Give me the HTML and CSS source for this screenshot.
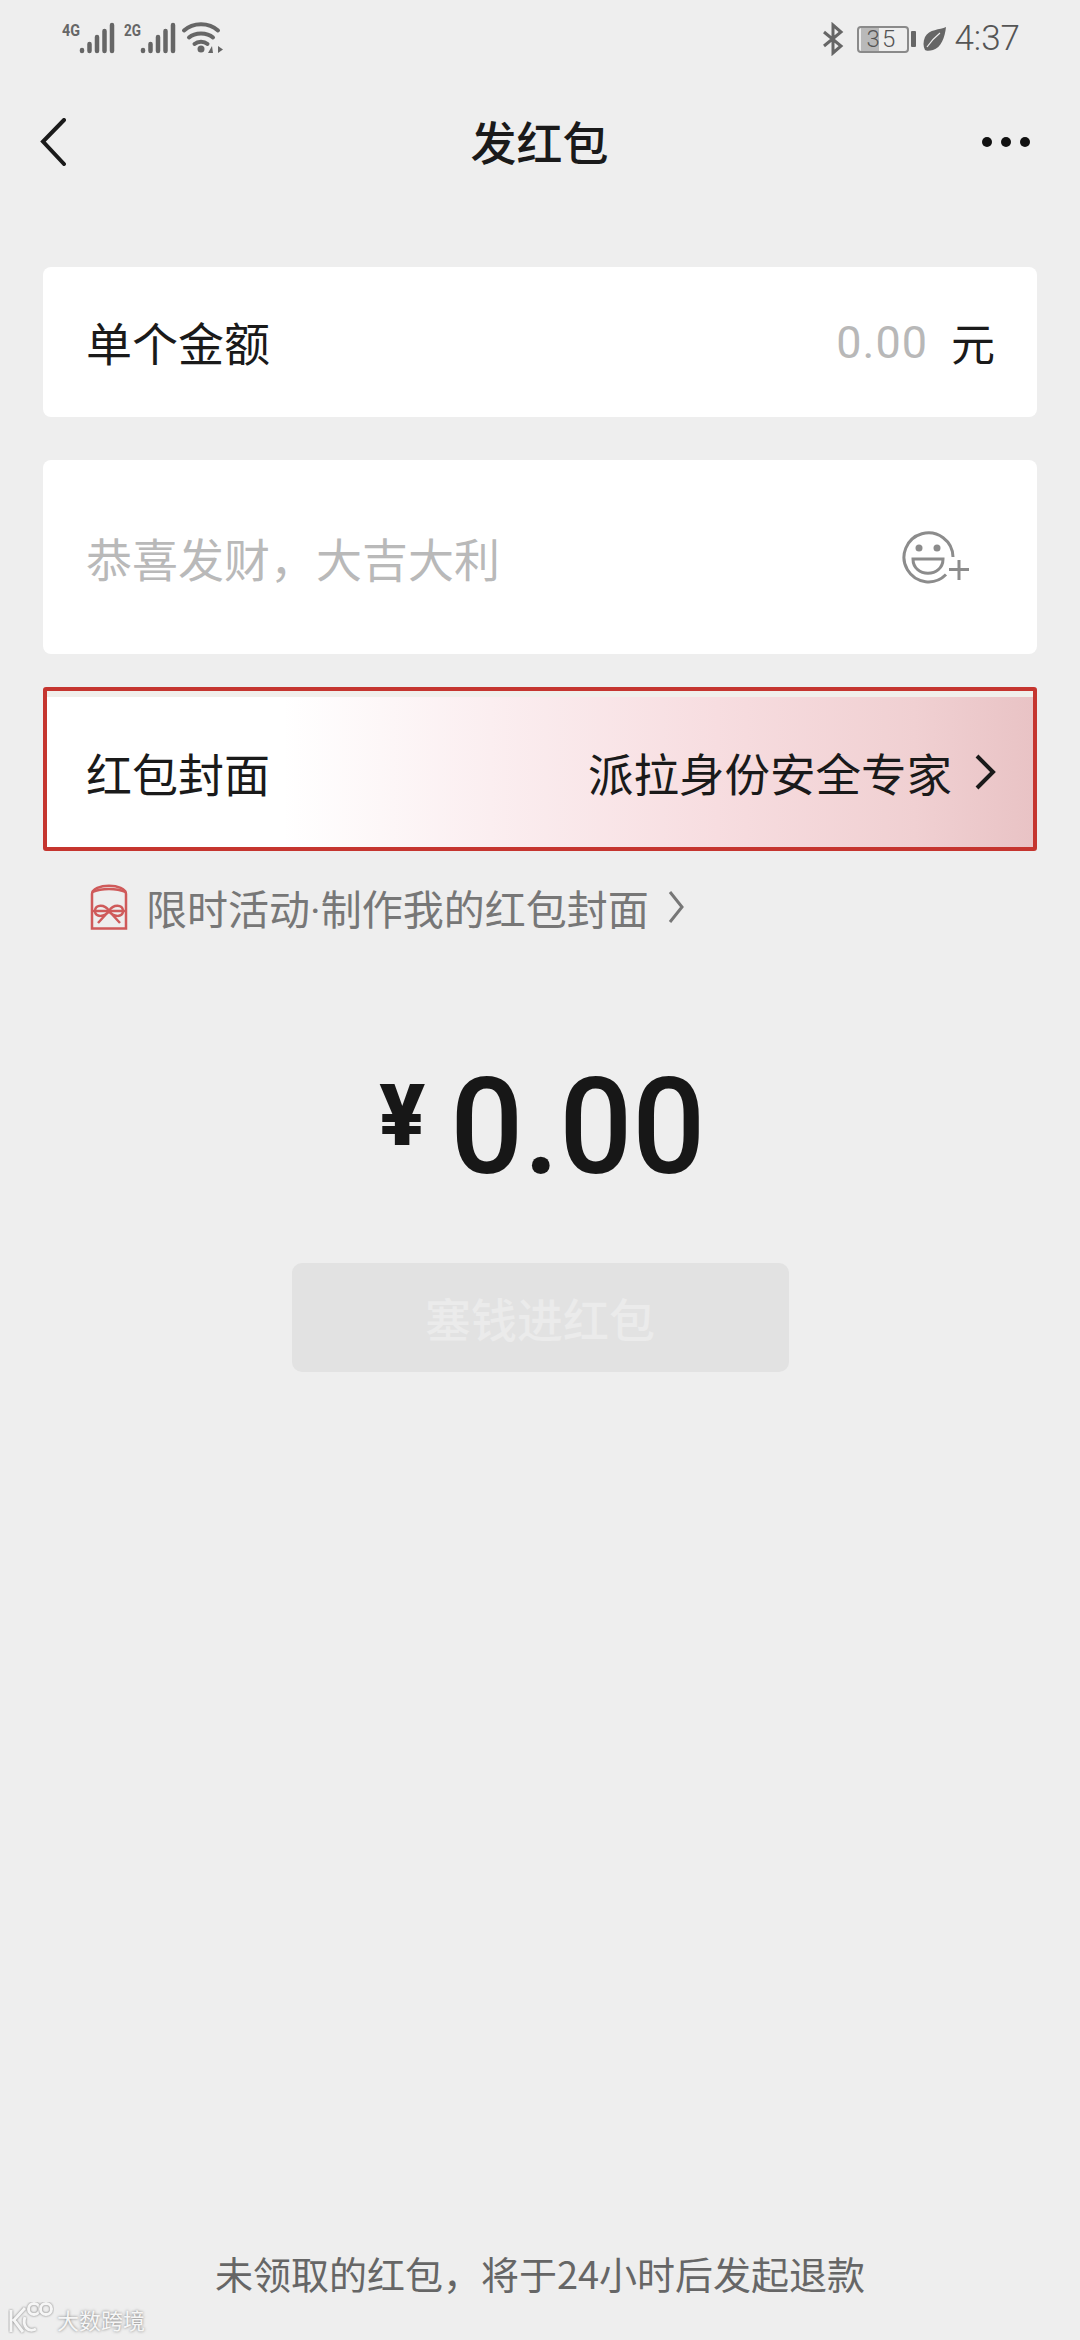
FILE: index.html
```html
<!DOCTYPE html>
<html lang="zh-CN">
<head>
    <meta charset="UTF-8">
    <meta name="viewport" content="width=device-width, initial-scale=1.0">
    <title>发红包</title>
    <link rel="stylesheet" href="styles.css">
</head>
<body>
    <div id="page">
        <div class="status">
            <svg class="status-left" width="162" height="36" viewBox="0 0 162 36">
                <text x="0" y="15" class="net" textLength="18" lengthAdjust="spacingAndGlyphs">4G</text>
                <g class="bars">
                    <path d="M20 30v-1M27.500 30v-7M35 30v-14M42.500 30v-20M50 30v-26"/>
                </g>
                <text x="62" y="15" class="net" textLength="17" lengthAdjust="spacingAndGlyphs">2G</text>
                <g class="bars">
                    <path d="M81 30v-1M88.500 30v-7M96 30v-14M103.500 30v-20M111 30v-26"/>
                </g>
                <g class="wifi">
                    <path d="M122 9.500C131 1 147 1 156 9.500"/>
                    <path d="M127 16.500C133 11 145 11 151 16.500"/>
                    <path d="M132.500 23C136 20 142 20 145.500 23"/>
                </g>
                <circle cx="139" cy="28" r="3.500" fill="#666"/>
                <path d="M151 32l-1-7-4 7h8M156 25v7l5-3.500z" fill="#666"/>
            </svg>
            <div class="status-right">
                <svg width="22" height="34" viewBox="0 0 22 34" class="bt">
                    <path d="M2 10l17 14-8 7V3l8 7-17 14"/>
                </svg>
                <div class="battery">
                    <div class="battery-fill"></div>
                    <span class="battery-num">35</span>
                </div>
                <div class="battery-nub"></div>
                <svg width="23" height="24" viewBox="0 0 23 24" class="leaf">
                    <path d="M23 0C17 3 6 2 2 10c-2 5-2 9 0 13 1 1 5 1 8 0C18 21 22 10 23 0z" fill="#666"/>
                    <path d="M4 20C8 14 12 10 17 6" stroke="#eee" stroke-width="1.200" fill="none"/>
                </svg>
                <span class="time">4:37</span>
            </div>
        </div>

        <div class="nav">
            <svg class="back" width="26" height="48" viewBox="0 0 26 48">
                <path d="M24 2L3 23.500 24 46"/>
            </svg>
            <span class="nav-title">发红包</span>
            <div class="more"><i></i><i></i><i></i></div>
        </div>

        <div class="content">
            <div class="card card-amount">
                <span>单个金额</span>
                <div class="amount-input">
                    <span class="amount-zero">0.00</span>
                    <span class="amount-unit">元</span>
                </div>
            </div>

            <div class="card card-wish">
                <span class="placeholder">恭喜发财，大吉大利</span>
                <svg class="smile" width="70" height="54" viewBox="0 0 70 54">
                    <path d="M44 44.500A24.500 24.500 0 1 1 51 27"/>
                    <circle cx="17" cy="18" r="3.500" class="dot"/>
                    <circle cx="35" cy="18" r="3.500" class="dot"/>
                    <path d="M11 29h30c0 19-30 19-30 0z"/>
                    <path d="M47 39.500h20M57 30v20"/>
                </svg>
            </div>

            <div class="cover">
                <div class="cover-inner">
                    <span>红包封面</span>
                    <div class="cover-value">
                        <span>派拉身份安全专家</span>
                        <svg width="22" height="38" viewBox="0 0 22 38">
                            <path d="M3 3l16 16L3 35"/>
                        </svg>
                    </div>
                </div>
            </div>

            <div class="promo">
                <svg width="38" height="46" viewBox="0 0 38 46">
                    <path d="M2 44.500V10C2 -1 36 -1 36 10v34.500z"/>
                    <path d="M2 8c10-4 24-4 34 0M2 27h34"/>
                    <path d="M19 27c-4-7-14-7-14 0s10 6 14 0c4 6 14 7 14 0s-10-7-14 0zM19 27L8 39M19 27l11 12"/>
                </svg>
                <span class="promo-text">限时活动<span class="promo-dot">·</span>制作我的红包封面</span>
                <svg class="promo-arrow" width="16" height="34" viewBox="0 0 16 34">
                    <path d="M2 2l12 15L2 32"/>
                </svg>
            </div>

            <div class="total">
                <span class="total-sign">¥</span>
                <span class="total-num">0.00</span>
            </div>

            <div class="submit">塞钱进红包</div>
        </div>

        <div class="footer">未领取的红包，将于24小时后发起退款</div>

        <div class="watermark">
            <svg width="46" height="34" viewBox="0 0 46 34">
                <path d="M3 8v22M17 6L6 18l9 12M17 15c-3 9 3 16 11 12"/>
                <circle cx="26" cy="7" r="5.500"/>
                <circle cx="38" cy="7" r="5.500"/>
            </svg>
            <span>大数跨境</span>
        </div>
    </div>
</body>
</html>
```

FILE: styles.css
```css
*{
    padding: 0;
    margin: 0;
    box-sizing: border-box;
}
body{
    background: #eeeeee;
    font-family: "Noto Sans CJK SC", Roboto, sans-serif;
    color: #1a1a1a;
}
#page{
    width: 1080px;
    height: 2340px;
    position: relative;
    display: flex;
    flex-direction: column;
    overflow: hidden;
}

/* status bar */
.status{
    height: 74px;
    padding: 4px 60px 0 62px;
    display: flex;
    align-items: center;
    justify-content: space-between;
}
.net{
    font-family: Roboto, sans-serif;
    font-weight: 700;
    font-size: 16px;
    fill: #666;
}
.bars path{
    stroke: #666;
    stroke-width: 4.500;
    stroke-linecap: round;
    fill: none;
}
.wifi path{
    stroke: #666;
    stroke-width: 4;
    stroke-linecap: round;
    fill: none;
}
.status-right{
    display: flex;
    align-items: center;
}
.bt{
    margin-right: 13px;
}
.bt path{
    stroke: #666;
    stroke-width: 3;
    fill: none;
}
.battery{
    width: 52px;
    height: 27px;
    border: 2px solid #8a8a8a;
    border-radius: 4px;
    position: relative;
    overflow: hidden;
}
.battery-fill{
    width: 18px;
    height: 100%;
    background: #b9b9b9;
    margin-left: 2px;
}
.battery-num{
    position: absolute;
    top: 0;
    left: 0;
    width: 100%;
    padding-right: 3px;
    text-align: center;
    font-family: Roboto, sans-serif;
    font-size: 24px;
    font-weight: 300;
    line-height: 23px;
    letter-spacing: 2px;
    color: #555;
}
.battery-nub{
    width: 5px;
    height: 16px;
    margin-left: 2px;
    background: #666;
    border-radius: 1px;
}
.leaf{
    margin-left: 7px;
}
.time{
    margin-left: 8px;
    font-family: Roboto, sans-serif;
    font-size: 35px;
    font-weight: 300;
    color: #555;
    line-height: 40px;
}

/* title bar */
.nav{
    height: 136px;
    padding: 0 50px 4px 40px;
    display: flex;
    align-items: center;
    justify-content: space-between;
}
.back{
    margin-top: 4px;
}
.back path{
    stroke: #1a1a1a;
    stroke-width: 4;
    stroke-linecap: round;
    fill: none;
}
.nav-title{
    font-size: 46px;
    font-weight: 500;
    line-height: 60px;
    margin-left: 31px;
}
.more{
    display: flex;
    gap: 9px;
    margin-top: 4px;
}
.more i{
    width: 10px;
    height: 10px;
    border-radius: 50%;
    background: #111;
}

.content{
    padding: 57px 43px 0;
}
.card{
    background: #fff;
    border-radius: 8px;
    padding: 0 42px 0 43px;
    display: flex;
    align-items: center;
    justify-content: space-between;
    font-size: 46px;
}
.card-amount{
    height: 150px;
    padding-bottom: 3px;
}
.amount-input{
    display: flex;
    align-items: center;
    margin-top: 3px;
}
.amount-zero{
    font-family: Roboto, sans-serif;
    font-size: 45px;
    letter-spacing: 1px;
    color: #b8b8b8;
    margin-right: 23px;
}
.amount-unit{
    font-size: 44px;
}
.card-wish{
    height: 194px;
    margin-top: 43px;
    padding-right: 65px;
}
.placeholder{
    color: #b9b9b9;
}
.smile path{
    stroke: #8c8c8c;
    stroke-width: 3;
    fill: none;
}
.smile .dot{
    fill: #8c8c8c;
}

/* the red frame is an annotation drawn on the screenshot */
.cover{
    height: 164px;
    margin-top: 33px;
    border: 4px solid #c5352f;
    border-radius: 3px;
    padding-top: 6px;
    background: #f0efeb;
}
.cover-inner{
    height: 100%;
    padding: 0 37px 0 39px;
    display: flex;
    align-items: center;
    justify-content: space-between;
    font-size: 46px;
    background: linear-gradient(90deg, #fff 0%, #fff 24%, #fbeef0 45%, #f7dde0 68%, #f0d0d2 88%, #e9c3c5 100%);
}
.cover-value{
    display: flex;
    align-items: center;
    gap: 22px;
    font-size: 45.500px;
}
.cover-value svg path{
    stroke: #1a1a1a;
    stroke-width: 4;
    fill: none;
}

.promo{
    height: 60px;
    margin-top: 26px;
    padding-left: 47px;
    display: flex;
    align-items: center;
    font-size: 41px;
    color: #777;
}
.promo svg path{
    stroke: #cf5a5a;
    stroke-width: 2.500;
    fill: none;
}
.promo-text{
    margin-left: 18px;
}
.promo-dot{
    font-family: Roboto, sans-serif;
}
.promo .promo-arrow{
    margin-left: 19px;
}
.promo .promo-arrow path{
    stroke: #777;
    stroke-width: 3;
}

.total{
    height: 160px;
    margin-top: 108px;
    padding: 6px 0 0 10px;
    display: flex;
    align-items: center;
    justify-content: center;
    color: #171717;
}
.total-sign{
    font-family: Roboto, sans-serif;
    font-size: 85px;
    font-weight: 900;
    line-height: 100px;
    margin-bottom: 24px;
    margin-right: 20px;
}
.total-num{
    display: inline-block;
    transform: scaleX(0.96);
    font-family: Roboto, sans-serif;
    font-size: 134px;
    font-weight: 500;
    line-height: 154px;
}
.submit{
    width: 497px;
    height: 109px;
    margin: 58px auto 0;
    border-radius: 10px;
    background: #e2e2e2;
    color: #ebebeb;
    font-size: 46px;
    font-weight: 500;
    line-height: 109px;
    text-align: center;
}

.footer{
    margin-top: auto;
    padding-bottom: 42px;
    font-size: 38px;
    line-height: 50px;
    text-align: center;
    color: #666;
}
.watermark{
    position: absolute;
    left: 8px;
    bottom: 4px;
    display: flex;
    align-items: center;
    gap: 3px;
    font-size: 22px;
    color: #f6f6f6;
    text-shadow: 0 0 3px #777;
}
.watermark path, .watermark circle{
    stroke: #f6f6f6;
    stroke-width: 3;
    fill: none;
    filter: drop-shadow(0 0 1px #777);
}
```
